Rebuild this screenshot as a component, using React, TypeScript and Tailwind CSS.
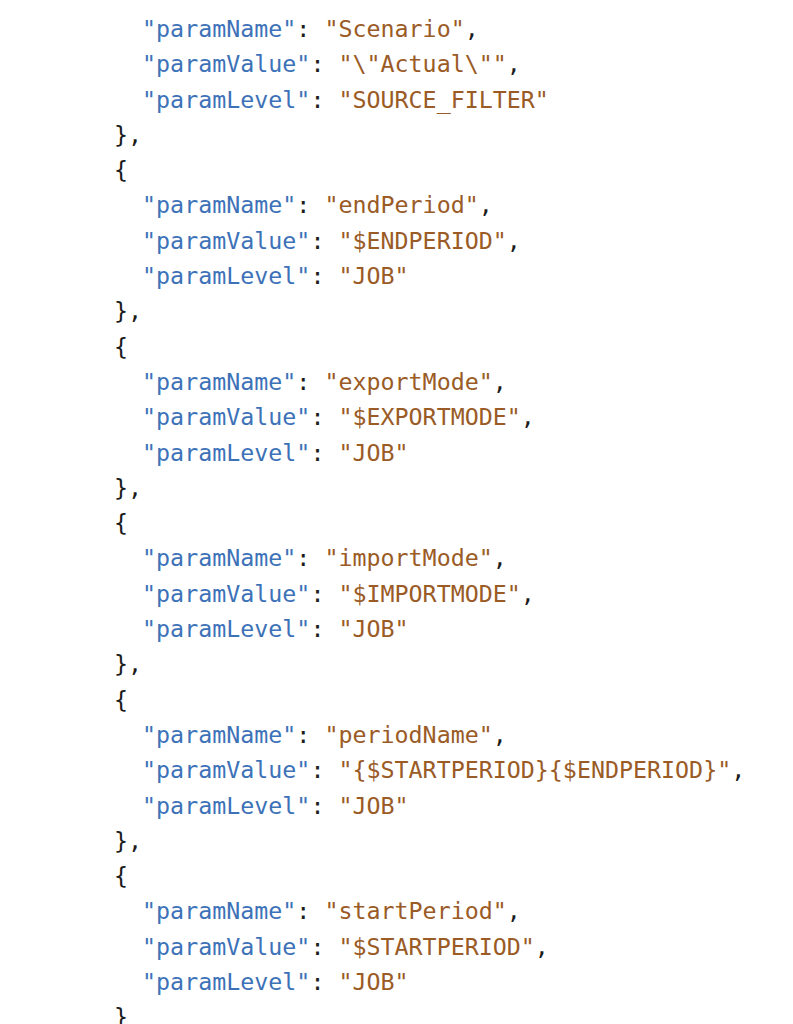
const params = [
  { name: "Scenario", value: '\\"Actual\\"', level: "SOURCE_FILTER" },
  { name: "endPeriod", value: "$ENDPERIOD", level: "JOB" },
  { name: "exportMode", value: "$EXPORTMODE", level: "JOB" },
  { name: "importMode", value: "$IMPORTMODE", level: "JOB" },
  { name: "periodName", value: "{$STARTPERIOD}{$ENDPERIOD}", level: "JOB" },
  { name: "startPeriod", value: "$STARTPERIOD", level: "JOB" },
];

function Row({ k, v, last }: { k: string; v: string; last?: boolean }) {
  return (
    <div className="h-[35.3px] leading-[35.3px] whitespace-pre">
      {"  "}
      <span className="text-[#3d72b8]">"{k}"</span>
      <span className="text-[#1c1c1c]">: </span>
      <span className="text-[#9a5b26]">"{v}"</span>
      {!last && <span className="text-[#1c1c1c]">,</span>}
    </div>
  );
}

function Brace({ text }: { text: string }) {
  return <div className="h-[35.3px] leading-[35.3px] whitespace-pre text-[#1c1c1c]">{text}</div>;
}

export default function App() {
  return (
    <div className="w-[793px] h-[1024px] overflow-hidden bg-white">
      <div className="pl-[114px] pt-[11px] text-[23.3px] font-['DejaVu_Sans_Mono',monospace]">
        {params.map((p, i) => (
          <div key={p.name}>
            {i > 0 && <Brace text="{" />}
            <Row k="paramName" v={p.name} />
            <Row k="paramValue" v={p.value} />
            <Row k="paramLevel" v={p.level} last />
            <Brace text={i < params.length - 1 ? "}," : "}"} />
          </div>
        ))}
      </div>
    </div>
  );
}
